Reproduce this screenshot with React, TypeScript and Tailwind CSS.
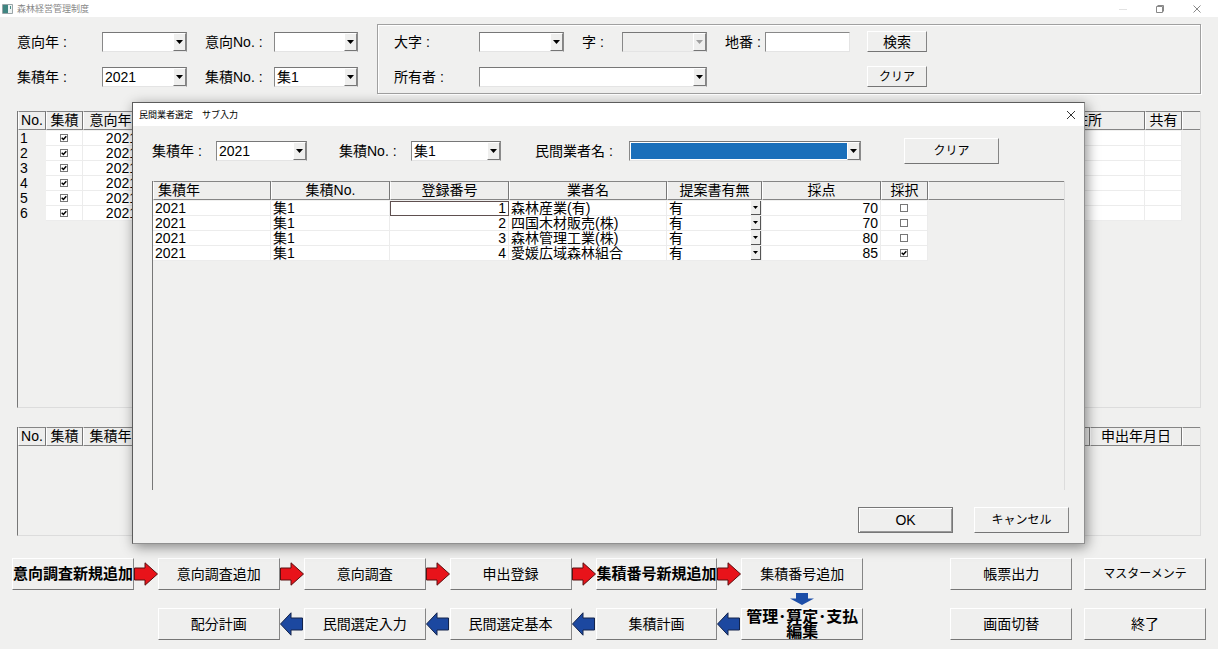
import { ReactNode } from "react";

const raised =
  "border border-t-white border-l-white border-r-[#858585] border-b-[#757575] bg-[#efefee]";

function Triangle({ className = "fill-black" }: { className?: string }) {
  return (
    <svg width="7" height="4" viewBox="0 0 7 4" className={className}>
      <path d="M0 0h7L3.5 4z" />
    </svg>
  );
}

type ComboProps = {
  id: string;
  value?: string;
  width: string;
  disabled?: boolean;
  selected?: boolean;
};

function Combo({ id, value = "", width, disabled, selected }: ComboProps) {
  return (
    <div
      className={`relative h-5 border border-t-[#777] border-l-[#888] border-r-[#8a8a8a] border-b-[#e4e4e4] ${width} ${
        disabled ? "bg-[#efefee]" : "bg-white"
      }`}
    >
      <select
        id={id}
        disabled={disabled}
        defaultValue={value}
        className={`block h-full w-full appearance-none pl-[2px] leading-4 outline-none ${
          selected ? "border border-white bg-[#1a6fba]" : ""
        }`}
      >
        <option value={value}>{value}</option>
      </select>
      <span
        className={`pointer-events-none absolute inset-y-0 right-0 flex w-[13px] items-center justify-center ${raised}`}
      >
        <Triangle className={disabled ? "fill-[#a0a0a0]" : "fill-black"} />
      </span>
    </div>
  );
}

function Tick({ label, checked }: { label: string; checked: boolean }) {
  return (
    <span className="inline-grid size-2 align-middle">
      <input
        type="checkbox"
        aria-label={label}
        defaultChecked={checked}
        className="peer size-2 appearance-none border border-[#777] bg-white [grid-area:1/1]"
      />
      <svg
        viewBox="0 0 8 8"
        className="pointer-events-none hidden size-2 fill-none stroke-black stroke-[1.5] [grid-area:1/1] peer-checked:block"
      >
        <path d="M1.7 3.8 3.4 5.5 6.3 2.2" />
      </svg>
    </span>
  );
}

function Th({ children, className = "" }: { children?: ReactNode; className?: string }) {
  return (
    <th
      className={`h-[19px] overflow-hidden border-t border-r border-b border-l border-t-[#858585] border-r-[#777] border-b-[#858585] border-l-white bg-[#eeeeed] p-0 text-center leading-[17px] font-normal whitespace-nowrap ${className}`}
    >
      {children}
    </th>
  );
}

const cell =
  "h-[15px] border-r border-b border-[#ececec] bg-white p-0 leading-[14px] whitespace-nowrap";

const panel =
  "overflow-hidden border-l border-r border-b border-l-[#777] border-r-[#dcdcdc] border-b-[#dcdcdc]";

function RightArrow() {
  return (
    <svg viewBox="0 0 24 24" className="h-6 w-6 fill-[#e8131a] stroke-[#5a1010]">
      <path d="M.5 6H11V.8L23.5 12 11 23.2V18H.5z" />
    </svg>
  );
}

function LeftArrow() {
  return (
    <svg viewBox="0 0 24 24" className="h-6 w-6 fill-[#1c48a0] stroke-[#14244c]">
      <path d="M22.500 6H11V.8L.5 12 11 23.2V18h11.500z" />
    </svg>
  );
}

function DownArrow() {
  return (
    <svg viewBox="0 0 24 12" className="h-3 w-6 fill-[#1c4ea8]">
      <path d="M6 0h12v5.5h6L12 12 0 5.5h6z" />
    </svg>
  );
}

function Button({ children, className = "" }: { children: ReactNode; className?: string }) {
  return (
    <button
      type="button"
      className={`flex items-center justify-center overflow-hidden whitespace-nowrap ${raised} ${className}`}
    >
      {children}
    </button>
  );
}

const menu = "h-8 text-[14px]";
const menuBold = "h-8 text-[15px] font-bold";
const menuRow =
  "grid grid-cols-[1fr_24px_1fr_24px_1fr_24px_1fr_24px_1fr_24px_1fr_87px_1fr_12px_1fr] items-center";

function MainTable() {
  return (
    <section className={`min-h-[120px] flex-1 ${panel}`}>
      <table className="w-full table-fixed border-separate border-spacing-0">
        <colgroup>
          <col className="w-7" />
          <col className="w-[37px]" />
          <col className="w-[55px]" />
          <col />
          <col className="w-[114px]" />
          <col className="w-[37px]" />
          <col className="w-[18px]" />
        </colgroup>
        <thead>
          <tr>
            <Th>No.</Th>
            <Th>集積</Th>
            <Th>意向年</Th>
            <Th />
            <Th>住所</Th>
            <Th>共有</Th>
            <Th className="border-r-0" />
          </tr>
          <tr className="h-px" />
        </thead>
        <tbody>
          {[1, 2, 3, 4, 5, 6].map((n) => (
            <tr key={n}>
              <td className="h-[15px] p-0 pl-[2px] leading-[15px]">{n}</td>
              <td className={`text-center ${cell}`}>
                <div className="flex justify-center">
                  <Tick label={`集積 ${n}`} checked />
                </div>
              </td>
              <td className={`text-right ${cell}`}>2021</td>
              <td className={cell} />
              <td className={cell} />
              <td className={cell} />
              <td />
            </tr>
          ))}
        </tbody>
      </table>
    </section>
  );
}

function SubTable() {
  return (
    <section className={`mt-[19px] h-[109px] ${panel}`}>
      <table className="w-full table-fixed border-separate border-spacing-0">
        <colgroup>
          <col className="w-7" />
          <col className="w-[37px]" />
          <col className="w-[55px]" />
          <col />
          <col className="w-[92px]" />
          <col className="w-[18px]" />
        </colgroup>
        <thead>
          <tr>
            <Th>No.</Th>
            <Th>集積</Th>
            <Th>集積年</Th>
            <Th />
            <Th>申出年月日</Th>
            <Th className="border-r-0" />
          </tr>
        </thead>
      </table>
    </section>
  );
}

const vendors = [
  { no: 1, name: "森林産業(有)", score: 70, adopted: false },
  { no: 2, name: "四国木材販売(株)", score: 70, adopted: false },
  { no: 3, name: "森林管理工業(株)", score: 80, adopted: false },
  { no: 4, name: "愛媛広域森林組合", score: 85, adopted: true },
];

function VendorDialog() {
  return (
    <div
      role="dialog"
      aria-labelledby="dialog-title"
      className="absolute top-[102px] right-[133px] bottom-[105px] left-[132px] flex flex-col border border-t-[#5c5c5c] border-r-[#909090] border-b-[#909090] border-l-[#5c5c5c] bg-[#f0f0ef] shadow-[2px_3px_12px_rgba(0,0,0,0.45)]"
    >
      <header className="flex h-[23px] shrink-0 items-center justify-between bg-white pr-2 pl-1.5">
        <h2 id="dialog-title" className="text-[9px]">
          民間業者選定　サブ入力
        </h2>
        <button type="button" aria-label="閉じる">
          <svg viewBox="0 0 10 10" className="size-2.5 stroke-[#333]">
            <path d="M1 1l8 8M9 1L1 9" />
          </svg>
        </button>
      </header>

      <div className="flex flex-1 flex-col pt-3 pr-[15px] pb-[10px] pl-[19px]">
        <div className="flex h-[26px] items-center whitespace-nowrap">
          <label htmlFor="d-year" className="w-16">集積年 :</label>
          <Combo id="d-year" value="2021" width="w-[91px]" />
          <label htmlFor="d-no" className="ml-8 w-[72px]">集積No. :</label>
          <Combo id="d-no" value="集1" width="w-[90px]" />
          <label htmlFor="d-vendor" className="ml-[34px] w-[94px]">民間業者名 :</label>
          <Combo id="d-vendor" width="w-[232px]" selected />
          <Button className="ml-[43px] h-[26px] w-[95px] text-[12px]">クリア</Button>
        </div>

        <section className="mt-[17px] mr-1 flex-1 overflow-hidden border-r border-l border-r-[#dcdcdc] border-l-[#777]">
          <table className="w-full table-fixed border-separate border-spacing-0">
            <colgroup>
              <col className="w-[118px]" />
              <col className="w-[119px]" />
              <col className="w-[119px]" />
              <col className="w-[158px]" />
              <col className="w-[95px]" />
              <col className="w-[119px]" />
              <col className="w-[47px]" />
              <col />
            </colgroup>
            <thead>
              <tr>
                <Th>
                  <div className="pl-1 text-left">集積年</div>
                </Th>
                <Th>集積No.</Th>
                <Th>登録番号</Th>
                <Th>業者名</Th>
                <Th>提案書有無</Th>
                <Th>採点</Th>
                <Th>採択</Th>
                <Th className="border-r-0" />
              </tr>
              <tr className="h-px" />
            </thead>
            <tbody>
              {vendors.map((v) => (
                <tr key={v.no}>
                  <td className={cell}>
                    <span className="pl-[2px]">2021</span>
                  </td>
                  <td className={cell}>
                    <span className="pl-[2px]">集1</span>
                  </td>
                  <td
                    className={`text-right ${cell} ${
                      v.no === 1 ? "outline -outline-offset-1 outline-[#5f5050]" : ""
                    }`}
                  >
                    <span className="pr-[2px]">{v.no}</span>
                  </td>
                  <td className={cell}>
                    <span className="pl-[2px]">{v.name}</span>
                  </td>
                  <td className={cell}>
                    <div className="relative h-[14px]">
                      <select
                        aria-label={`提案書有無 ${v.no}`}
                        className="block h-[14px] w-full appearance-none pl-[2px] leading-[14px]"
                      >
                        <option>有</option>
                      </select>
                      <span className="pointer-events-none absolute inset-y-0 right-0 flex w-[10px] items-center justify-center border-r border-b border-[#555] bg-[#efefee]">
                        <svg viewBox="0 0 5 3" className="h-[3px] w-[5px]">
                          <path d="M0 0h5L2.5 3z" />
                        </svg>
                      </span>
                    </div>
                  </td>
                  <td className={`text-right ${cell}`}>
                    <span className="pr-[2px]">{v.score}</span>
                  </td>
                  <td className={cell}>
                    <div className="flex justify-center">
                      <Tick label={`採択 ${v.no}`} checked={v.adopted} />
                    </div>
                  </td>
                  <td />
                </tr>
              ))}
            </tbody>
          </table>
        </section>

        <div className="mt-[17px] flex justify-end gap-[21px]">
          <button
            type="button"
            className="h-[26px] w-[95px] border border-[#777] bg-[#efefee] shadow-[inset_1px_1px_0_#fff,inset_-1px_-1px_0_#999]"
          >
            OK
          </button>
          <Button className="h-[26px] w-[95px] text-[12px]">キャンセル</Button>
        </div>
      </div>
    </div>
  );
}

export default function App() {
  return (
    <div className="relative flex min-h-screen w-full flex-col bg-[#f0f0ef] font-['Liberation_Sans','Noto_Sans_CJK_JP',sans-serif] text-[14px] leading-4 text-black">
      <header className="flex h-[17px] items-center justify-between bg-white pr-[3px] pl-[2px]">
        <div className="flex items-center gap-1">
          <svg viewBox="0 0 11 10" className="h-[10px] w-[11px]">
            <path d="M.5.5h10v9H.5z" fill="#eef3f3" stroke="#9aa5a8" />
            <path d="M1 1h5v8H1z" fill="#3f8581" />
            <path d="M8 2h1v3H8z" fill="#4b8f8b" />
          </svg>
          <h1 className="text-[9px] text-[#888]">森林経営管理制度</h1>
        </div>
        <div className="flex">
          <button type="button" aria-label="最小化" className="flex w-[37px] justify-center">
            <svg viewBox="0 0 8 8" className="size-2 stroke-[#e2e2e2]">
              <path d="M0 4.5h8" />
            </svg>
          </button>
          <button type="button" aria-label="元に戻す" className="flex w-[37px] justify-center">
            <svg viewBox="0 0 8 8" className="size-2 fill-none stroke-[#888]">
              <path d="M.5 1.5h6v6h-6zM1.5.5h6v6" />
            </svg>
          </button>
          <button type="button" aria-label="閉じる" className="flex w-[37px] justify-center">
            <svg viewBox="0 0 8 8" className="size-2 stroke-[#888]">
              <path d="M.5.5l7 7M7.5.5l-7 7" />
            </svg>
          </button>
        </div>
      </header>

      <main className="flex flex-1 flex-col pt-[7px] pb-[9px]">
        <div className="mx-[17px] flex gap-[19px] whitespace-nowrap">
          <div className="grid grid-cols-[85px_103px_69px_84px] grid-rows-[21px_21px] content-start items-center gap-y-[14px] pt-[7px]">
            <label htmlFor="iko-year">意向年 :</label>
            <Combo id="iko-year" width="w-[85px]" />
            <label htmlFor="iko-no">意向No. :</label>
            <Combo id="iko-no" width="w-[84px]" />
            <label htmlFor="shu-year">集積年 :</label>
            <Combo id="shu-year" value="2021" width="w-[85px]" />
            <label htmlFor="shu-no">集積No. :</label>
            <Combo id="shu-no" value="集1" width="w-[84px]" />
          </div>

          <div className="flex-1 border border-[#a0a0a0] shadow-[inset_1px_1px_0_#fff,1px_1px_0_#fff]">
            <div className="grid grid-cols-[85px_103px_40px_103px_40px_102px_60px] items-center gap-y-[14px] py-1.5 pl-4">
              <label htmlFor="oaza">大字 :</label>
              <Combo id="oaza" width="w-[85px]" />
              <label htmlFor="aza">字 :</label>
              <Combo id="aza" width="w-[85px]" disabled />
              <label htmlFor="chiban">地番 :</label>
              <input
                id="chiban"
                type="text"
                className="h-5 w-[85px] border border-t-[#888] border-r-[#e4e4e4] border-b-[#e4e4e4] border-l-[#888] bg-white px-[2px]"
              />
              <Button className="h-[21px]">検索</Button>
              <label htmlFor="owner">所有者 :</label>
              <div className="col-span-5">
                <Combo id="owner" width="w-[228px]" />
              </div>
              <Button className="h-[21px] text-[12px]">クリア</Button>
            </div>
          </div>
        </div>

        <div className="mx-[17px] mt-[17px] flex flex-1 flex-col">
          <MainTable />
          <SubTable />
        </div>

        <nav className="mt-[22px] px-3">
          <div className={menuRow}>
            <Button className={menuBold}>意向調査新規追加</Button>
            <RightArrow />
            <Button className={menu}>意向調査追加</Button>
            <RightArrow />
            <Button className={menu}>意向調査</Button>
            <RightArrow />
            <Button className={menu}>申出登録</Button>
            <RightArrow />
            <Button className={menuBold}>集積番号新規追加</Button>
            <RightArrow />
            <Button className={menu}>集積番号追加</Button>
            <span />
            <Button className={menu}>帳票出力</Button>
            <span />
            <Button className="h-8 text-[12px]">マスターメンテ</Button>
          </div>

          <div className={`h-[18px] ${menuRow}`}>
            <div className="col-start-11 flex justify-center">
              <DownArrow />
            </div>
          </div>

          <div className={menuRow}>
            <span />
            <span />
            <Button className={menu}>配分計画</Button>
            <LeftArrow />
            <Button className={menu}>民間選定入力</Button>
            <LeftArrow />
            <Button className={menu}>民間選定基本</Button>
            <LeftArrow />
            <Button className={menu}>集積計画</Button>
            <LeftArrow />
            <Button className="h-8 text-[16px] leading-[15px] font-bold">
              管理･算定･支払
              <br />
              編集
            </Button>
            <span />
            <Button className={menu}>画面切替</Button>
            <span />
            <Button className={menu}>終了</Button>
          </div>
        </nav>
      </main>

      <VendorDialog />
    </div>
  );
}
